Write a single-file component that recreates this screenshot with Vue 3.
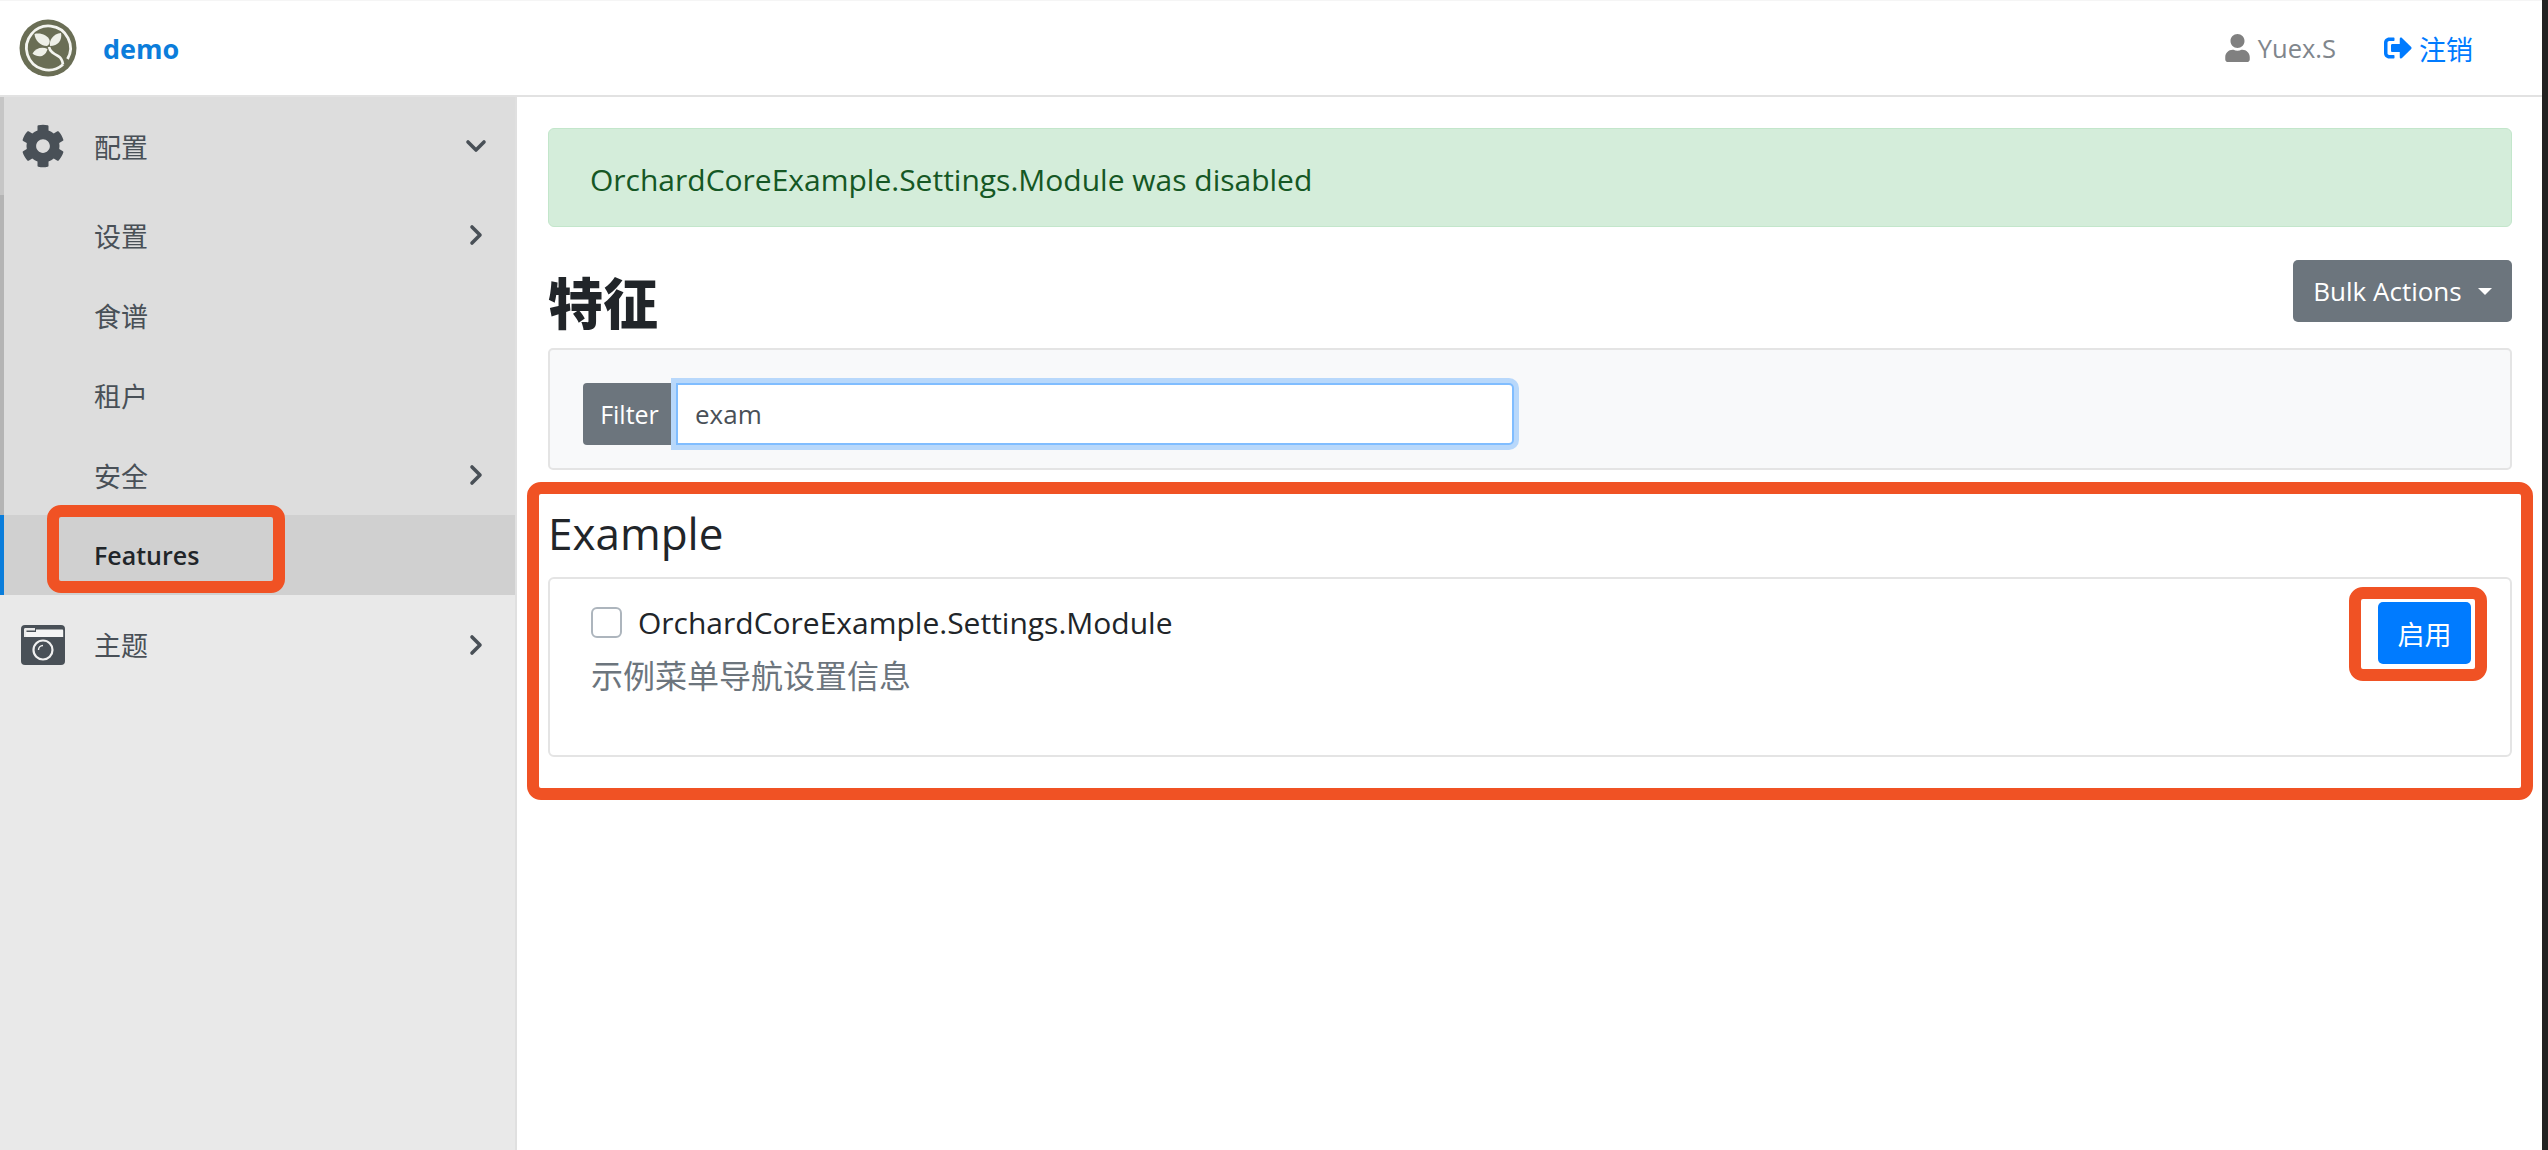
<script setup>
const children = [
  { label: '设置', arrow: true },
  { label: '食谱' },
  { label: '租户' },
  { label: '安全', arrow: true },
]
</script>

<template>
  <div class="page">
    <div class="app">
      <header class="topbar">
        <svg class="logo" viewBox="0 0 58 58">
          <circle cx="29" cy="29" r="28.500" fill="#6a6e55" />
          <path d="M44 45.500A22 22 0 1 1 48.500 40" fill="none" stroke="#f4f5f0" stroke-width="2.800" />
          <path d="M28 27C21 27 16 21 15.500 15c6-1.500 13 1 15 6 .8 2-.5 5-2.500 6Z" fill="#eef0e8" />
          <path d="M31 27c-1-6 3-12 11-13 1.500 7-3 13-11 13Z" fill="#eef0e8" />
          <path d="M28.500 30c-5-2.500-12-1-15 4.500 5 4.500 13 4 15-4.500Z" fill="#eef0e8" />
          <path d="M30 28c1 5 5 7 9 9 3 1.500 4.500 5 5 8.500" fill="none" stroke="#f4f5f0" stroke-width="2.600" />
        </svg>
        <a class="brand">demo</a>
        <div class="spacer"></div>
        <span class="user">
          <svg class="user-icon" viewBox="0 0 448 512"><path fill="currentColor" d="M224 256c70.7 0 128-57.3 128-128S294.7 0 224 0 96 57.3 96 128s57.3 128 128 128zm89.6 32h-16.7c-22.2 10.2-46.9 16-72.9 16s-50.6-5.800-72.9-16h-16.7C60.200 288 0 348.200 0 422.400V464c0 26.500 21.500 48 48 48h352c26.500 0 48-21.500 48-48v-41.600c0-74.200-60.200-134.400-134.400-134.400z" /></svg>
          Yuex.S
        </span>
        <a class="logout">
          <svg class="logout-icon" viewBox="0 0 512 512"><path fill="currentColor" d="M497 273L329 441c-15 15-41 4.500-41-17v-96H152c-13.300 0-24-10.700-24-24v-96c0-13.300 10.700-24 24-24h136V88c0-21.400 25.900-32 41-17l168 168c9.300 9.400 9.300 24.600 0 34zM192 436v-40c0-6.600-5.400-12-12-12H96c-17.700 0-32-14.300-32-32V160c0-17.700 14.300-32 32-32h84c6.600 0 12-5.400 12-12V76c0-6.600-5.400-12-12-12H96c-53 0-96 43-96 96v192c0 53 43 96 96 96h84c6.600 0 12-5.400 12-12z" /></svg>
          注销
        </a>
      </header>

      <div class="body">
        <aside class="sidebar">
          <div class="group">
            <div class="item top first">
              <svg class="nav-icon" viewBox="0 0 512 512"><path fill="currentColor" d="M487.4 315.7l-42.6-24.6c4.3-23.2 4.3-47 0-70.2l42.6-24.6c4.9-2.8 7.1-8.6 5.5-14-11.1-35.6-30-67.8-54.7-94.6-3.8-4.1-10-5.1-14.8-2.3L380.8 110c-17.9-15.4-38.5-27.3-60.8-35.1V25.8c0-5.6-3.9-10.5-9.4-11.7-36.7-8.2-74.3-7.8-109.2 0-5.5 1.2-9.4 6.1-9.4 11.7V75c-22.2 7.9-42.8 19.8-60.8 35.1L88.7 85.5c-4.9-2.8-11-1.9-14.8 2.3-24.7 26.7-43.6 58.9-54.7 94.6-1.7 5.4.6 11.2 5.5 14L67.3 221c-4.3 23.2-4.3 47 0 70.2l-42.6 24.6c-4.9 2.8-7.1 8.6-5.5 14 11.1 35.6 30 67.8 54.7 94.6 3.8 4.1 10 5.1 14.8 2.3l42.6-24.6c17.9 15.4 38.5 27.3 60.8 35.1v49.2c0 5.6 3.9 10.5 9.4 11.7 36.7 8.2 74.3 7.8 109.2 0 5.5-1.2 9.4-6.1 9.4-11.7v-49.2c22.2-7.9 42.8-19.8 60.8-35.1l42.6 24.6c4.9 2.8 11 1.9 14.8-2.3 24.7-26.7 43.6-58.9 54.7-94.6 1.5-5.5-.7-11.3-5.6-14.1zM256 336c-44.1 0-80-35.9-80-80s35.9-80 80-80 80 35.9 80 80-35.9 80-80 80z" /></svg>
              <span class="label">配置</span>
              <svg class="chev down" viewBox="0 0 24 24"><path d="M4 8l8 8 8-8" /></svg>
            </div>
            <div v-for="c in children" :key="c.label" class="item child">
              <span class="label">{{ c.label }}</span>
              <svg v-if="c.arrow" class="chev" viewBox="0 0 24 24"><path d="M8 4l8 8-8 8" /></svg>
            </div>
            <div class="item child active"><span class="label">Features</span></div>
          </div>
          <div class="item top">
            <svg class="nav-icon" viewBox="0 0 44 40">
              <rect width="44" height="40" rx="4" fill="currentColor" />
              <path d="M3 12V4.500C3 3.500 3.500 3 4.500 3H14v2.500H5.500V12Z" fill="#e9e9e9" />
              <path d="M5 7h10V4.500h26c.8 0 1.200.5 1.200 1.200V12H5Z" fill="#f4f4f4" />
              <circle cx="22" cy="25" r="9.500" fill="none" stroke="#f0f0f0" stroke-width="2.200" />
              <path d="M17.500 25a4.500 4.500 0 0 1 4.500-4.500" fill="none" stroke="#f0f0f0" stroke-width="1.400" />
            </svg>
            <span class="label">主题</span>
            <svg class="chev" viewBox="0 0 24 24"><path d="M8 4l8 8-8 8" /></svg>
          </div>
        </aside>

        <main class="main">
          <div class="alert">OrchardCoreExample.Settings.Module was disabled</div>
          <div class="title-row">
            <h1>特征</h1>
            <button class="bulk">Bulk Actions<i class="caret"></i></button>
          </div>
          <div class="filter-card">
            <div class="input-group">
              <span class="addon">Filter</span>
              <div class="input">exam</div>
            </div>
          </div>
          <h2>Example</h2>
          <div class="feature-card">
            <div class="feature-text">
              <div class="check-row">
                <span class="checkbox"></span>
                <span>OrchardCoreExample.Settings.Module</span>
              </div>
              <div class="desc">示例菜单导航设置信息</div>
            </div>
            <button class="enable">启用</button>
          </div>
        </main>
      </div>
    </div>
    <div class="edge"></div>

    <div class="mark mark-features"></div>
    <div class="mark mark-section"></div>
    <div class="mark mark-button"></div>
  </div>
</template>

<style>
html, body { margin: 0; background: #fff; }
</style>

<style scoped>
.page {
  position: relative;
  display: flex;
  width: 2548px;
  height: 1150px;
  overflow: hidden;
  font-family: "Open Sans", "Noto Sans CJK SC", sans-serif;
  color: #212529;
  background: #fff;
}
.app { flex: 1; display: flex; flex-direction: column; min-width: 0; }
.edge { width: 6px; background: #222; }

.topbar {
  height: 97px;
  box-sizing: border-box;
  flex: none;
  display: flex;
  align-items: center;
  padding-left: 19px;
  border-bottom: 2px solid #e2e2e2;
  border-top: 1px solid #f5f5f5;
}
.logo { width: 58px; height: 58px; }
.brand {
  margin-left: 26px;
  color: #0b7ddb;
  font-size: 27px;
  font-weight: 700;
}
.spacer { flex: 1; }
.user {
  display: flex;
  align-items: center;
  gap: 8px;
  color: #80868c;
  font-size: 25.500px;
}
.user-icon { width: 25px; height: 28px; color: #808080; }
.logout {
  display: flex;
  align-items: center;
  gap: 7px;
  margin-left: 48px;
  margin-right: 69px;
  color: #007bff;
  font-size: 27px;
}
.logout-icon { width: 28px; height: 28px; }

.body { flex: 1; display: flex; min-height: 0; }
.sidebar {
  width: 517px;
  box-sizing: border-box;
  flex: none;
  background: #e9e9e9;
  border-right: 2px solid #e0e0e0;
}
.group { background: #ddd; }
.item {
  display: flex;
  align-items: center;
  color: #495057;
  font-size: 27px;
  box-sizing: border-box;
}
.item.top { height: 99px; padding-left: 21px; }
.item.top.first { height: 98px; padding-left: 17px; border-left: 4px solid #c6c6c6; }
.item.child { height: 80px; padding-left: 94px; border-left: 4px solid #b4b4b4; }
.item.child .label { margin-left: -4px; }
.item.active {
  background: #d0d0d0;
  border-left-color: #0a7ddb;
  color: #212529;
  font-weight: 600;
  font-size: 25px;
}
.nav-icon { width: 44px; height: 44px; flex: none; margin-right: 29px; }
.label { flex: 1; }
.chev {
  width: 24px;
  height: 24px;
  margin-right: 27px;
  fill: none;
  stroke: #495057;
  stroke-width: 3.600;
  stroke-linecap: round;
  stroke-linejoin: round;
}

.main {
  flex: 1;
  min-width: 0;
  padding: 31px 30px 0 31px;
}
.alert {
  height: 99px;
  box-sizing: border-box;
  display: flex;
  align-items: center;
  padding: 4px 0 0 41px;
  background: #d4edda;
  border: 1px solid #c3e6cb;
  border-radius: 6px;
  color: #155724;
  font-size: 30px;
}
.title-row {
  display: flex;
  justify-content: space-between;
  align-items: flex-start;
  margin-top: 33px;
  height: 88px;
}
h1 {
  margin: 0;
  font-size: 55px;
  line-height: 86px;
  font-weight: 900;
}
.bulk {
  width: 219px;
  height: 62px;
  border: 0;
  border-radius: 5px;
  background: #6c757d;
  color: #fff;
  font: inherit;
  font-size: 26px;
  display: flex;
  align-items: center;
  justify-content: center;
  gap: 16px;
  padding: 0;
}
.caret {
  border-top: 7px solid #fff;
  border-left: 7px solid transparent;
  border-right: 7px solid transparent;
}
.filter-card {
  height: 122px;
  box-sizing: border-box;
  background: #f8f9fa;
  border: 2px solid #e4e4e4;
  border-radius: 5px;
  padding: 33px 0 0 33px;
}
.input-group { display: flex; width: 931px; height: 62px; }
.addon {
  width: 93px;
  flex: none;
  display: flex;
  align-items: center;
  justify-content: center;
  background: #6c757d;
  color: #fff;
  font-size: 25px;
  border-radius: 4px 0 0 4px;
}
.input {
  flex: 1;
  display: flex;
  align-items: center;
  padding-left: 17px;
  background: #fff;
  border: 2px solid #80bdff;
  border-radius: 0 5px 5px 0;
  box-shadow: 0 0 0 5px #b8d8fb;
  color: #495057;
  font-size: 26px;
  position: relative;
}
h2 {
  margin: 19px 0 0;
  font-size: 44px;
  line-height: 88px;
  font-weight: 400;
}
.feature-card {
  height: 180px;
  box-sizing: border-box;
  display: flex;
  justify-content: space-between;
  align-items: flex-start;
  border: 2px solid #e4e4e4;
  border-radius: 6px;
  padding: 23px 39px 0 41px;
}
.check-row {
  display: flex;
  align-items: center;
  gap: 16px;
  font-size: 30px;
}
.checkbox {
  width: 31px;
  height: 31px;
  box-sizing: border-box;
  background: #fff;
  border: 2px solid #adb5bd;
  border-radius: 6px;
}
.desc { margin-top: 11px; color: #6c757d; font-size: 32px; line-height: 44px; }
.enable {
  width: 93px;
  height: 62px;
  border: 0;
  border-radius: 5px;
  background: #007bff;
  color: #fff;
  font: inherit;
  font-size: 27px;
  padding: 0;
}

.mark {
  position: absolute;
  box-sizing: border-box;
  border: 12px solid #f05224;
  border-radius: 14px;
  pointer-events: none;
}
.mark-features { left: 47px; top: 505px; width: 238px; height: 88px; }
.mark-section { left: 527px; top: 482px; width: 2006px; height: 318px; }
.mark-button { left: 2349px; top: 587px; width: 138px; height: 94px; }
</style>
